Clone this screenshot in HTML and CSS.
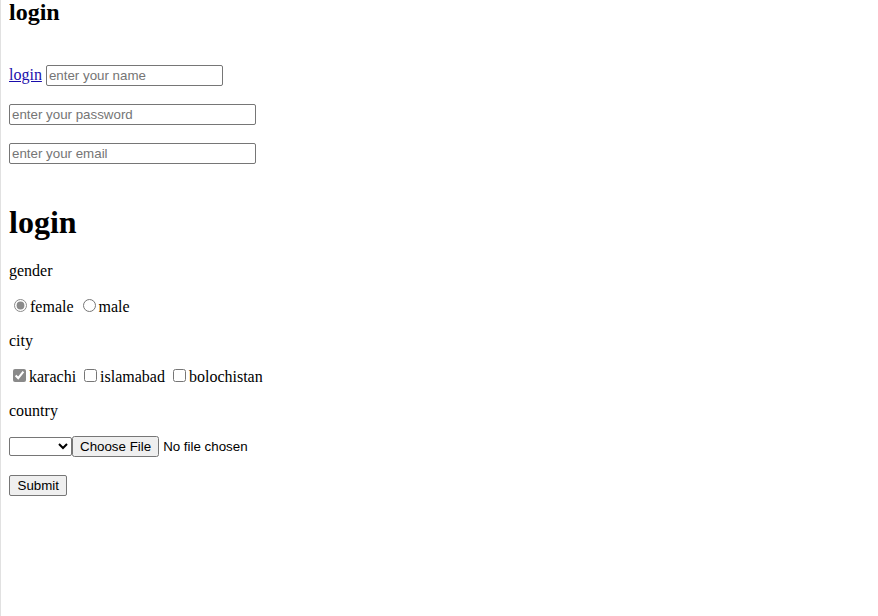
FILE: index.html
```html
<!DOCTYPE html>
<html>
<head>
<meta charset="utf-8">
<title>login</title>
<link rel="stylesheet" href="styles.css">
</head>
<body>
<h2 class="title">login</h2>
<form class="form-login">
  <p class="row row-input"><a href="#" class="link">login</a> <input class="field" type="text" placeholder="enter your name"></p>
  <p class="row row-input"><input class="field field-wide" type="password" placeholder="enter your password"></p>
  <p class="row row-input"><input class="field field-wide" type="email" placeholder="enter your email"></p>
</form>
<form class="form-details">
  <h1 class="heading">login</h1>
  <p class="row">gender</p>
  <p class="row"><input class="radio" type="radio" name="gender" checked>female <input class="radio" type="radio" name="gender">male</p>
  <p class="row">city</p>
  <p class="row"><input class="check" type="checkbox" checked>karachi <input class="check" type="checkbox">islamabad <input class="check" type="checkbox">bolochistan</p>
  <p class="row">country</p>
  <p class="row"><select class="select"><option></option></select><input class="file" type="file"></p>
  <p class="row row-submit"><button class="btn" type="submit">Submit</button></p>
</form>
</body>
</html>
```
FILE: styles.css
```css
html {
  border-left: 1px solid #e1e1e1;
  min-height: 100%;
  box-sizing: border-box;
}
body {
  margin: 0 0 0 8px;
  font-family: "Liberation Serif", "Times New Roman", serif;
  font-size: 16px;
  color: #000;
  background: #fff;
}
.title {
  font-size: 24px;
  font-weight: bold;
  margin: -1px 0 0;
}
.form-login {
  margin-top: 39px;
}
.row {
  margin: 16px 0;
}
.row-input {
  margin: 18px 0;
}
.row-submit {
  margin-top: 18px;
}
.link {
  color: #1a0dab;
}
.field {
  font-family: "Liberation Sans", Arial, sans-serif;
  font-size: 13.33px;
  width: 177px;
  height: 21px;
  box-sizing: border-box;
  border: 1px solid #767676;
  border-radius: 2px;
  padding: 1px 2px;
  margin: 0;
}
.field::placeholder {
  color: #757575;
}
.field-wide {
  width: 247px;
}
.heading {
  font-size: 32px;
  font-weight: bold;
  margin: 40px 0 21px;
}
.radio {
  accent-color: #8a8a8a;
  margin: 3px 3px 0 5px;
}
.check {
  accent-color: #8a8a8a;
  margin: 3px 3px 3px 4px;
}
.select {
  font-family: "Liberation Sans", Arial, sans-serif;
  font-size: 13.33px;
  width: 63px;
  height: 19px;
  border: 1px solid #767676;
  border-radius: 2px;
  margin: 0;
  background: #fff;
}
.file {
  font-family: "Liberation Sans", Arial, sans-serif;
  font-size: 13.33px;
  margin: 0;
}
.btn {
  font-family: "Liberation Sans", Arial, sans-serif;
  font-size: 13.33px;
  margin: 0;
  padding: 1px 7.5px;
  border: 1px solid #767676;
  border-radius: 2px;
  background: #efefef;
  height: 21px;
}
```
